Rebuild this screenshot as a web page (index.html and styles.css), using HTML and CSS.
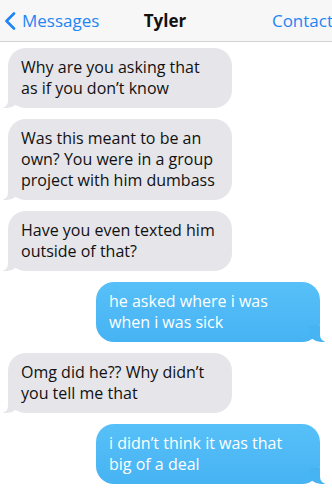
FILE: index.html
```html
<!DOCTYPE html>
<html lang="en">

<head>
    <meta charset="UTF-8">
    <meta name="viewport" content="width=device-width, initial-scale=1.0">
    <title>Tyler</title>
    <link rel="stylesheet" href="styles.css">
</head>

<body>
    <div class="phone">
        <div class="topbar">
            <div class="back">
                <svg class="chevron" width="12" height="18" viewBox="0 0 12 18">
                    <path d="M10 1.5 L2.5 9 L10 16.5" fill="none" stroke="#1e85f5" stroke-width="2.6" stroke-linecap="round" stroke-linejoin="round"/>
                </svg>
                <span>Messages</span>
            </div>
            <div class="name">Tyler</div>
            <div class="contact">Contact</div>
        </div>

        <div class="thread">
            <div class="bubble them">Why are you asking that<br>as if you don’t know</div>
            <div class="bubble them">Was this meant to be an<br>own? You were in a group<br>project with him dumbass</div>
            <div class="bubble them">Have you even texted him<br>outside of that?</div>
            <div class="bubble me">he asked where i was<br>when i was sick</div>
            <div class="bubble them">Omg did he?? Why didn’t<br>you tell me that</div>
            <div class="bubble me">i didn’t think it was that<br>big of a deal</div>
        </div>
    </div>
</body>

</html>
```

FILE: styles.css
```css
body {
    margin: 0;
    background: #fff;
    font-family: "Open Sans", Arial, sans-serif;
    overflow: hidden;
}

.phone {
    width: 332px;
    height: 498px;
}

.topbar {
    display: grid;
    grid-template-columns: 1fr auto 1fr;
    align-items: center;
    height: 41px;
    background: #f7f7f7;
    border-bottom: 1px solid #d3d3d3;
    font-size: 17px;
}

.back {
    display: flex;
    align-items: center;
    gap: 6px;
    padding-left: 4px;
    color: #1e85f5;
}

.chevron {
    display: block;
}

.name {
    font-weight: 700;
    color: #111;
    padding-right: 2px;
}

.contact {
    text-align: right;
    color: #1e85f5;
    margin-right: -1px;
}

.thread {
    display: flex;
    flex-direction: column;
    gap: 11px;
    padding: 6px 0 0;
}

.bubble {
    position: relative;
    width: 224px;
    box-sizing: border-box;
    padding: 9px 13px;
    border-radius: 18px;
    font-size: 16px;
    line-height: 21px;
    white-space: nowrap;
}

.them {
    align-self: flex-start;
    margin-left: 8px;
    background: #e5e5ea;
    color: #111;
}

.me {
    align-self: flex-end;
    margin-right: 12px;
    background: linear-gradient(#57c0f8, #46b3f3);
    color: #fff;
}

/* tails */
.bubble::before,
.bubble::after {
    content: "";
    position: absolute;
    bottom: 0;
    height: 16px;
}

.them::before {
    left: -5px;
    width: 16px;
    background: #e5e5ea;
    border-bottom-right-radius: 12px 10px;
}

.them::after {
    left: -12px;
    width: 12px;
    background: #fff;
    border-bottom-right-radius: 7px;
}

.me::before {
    right: -5px;
    width: 16px;
    background: #46b3f3;
    border-bottom-left-radius: 12px 10px;
}

.me::after {
    right: -12px;
    width: 12px;
    background: #fff;
    border-bottom-left-radius: 7px;
}
```
